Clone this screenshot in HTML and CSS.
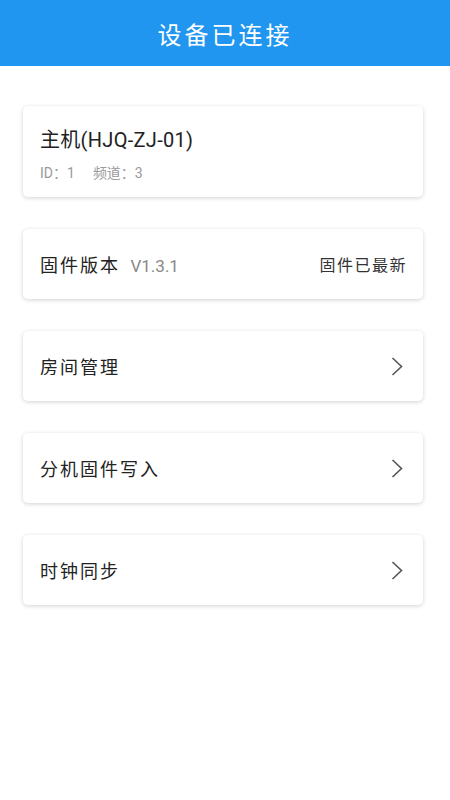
FILE: index.html
```html
<!DOCTYPE html>
<html>
<head>
    <title>设备已连接</title>
    <link rel="stylesheet" href="styles.css">
</head>
<body>
    <div class="header">设备已连接</div>
    <div class="list">
        <div class="card device">
            <div class="device-name">主机(HJQ-ZJ-01)</div>
            <div class="device-info"><span>ID：1</span><span>频道：3</span></div>
        </div>
        <div class="card row">
            <div class="label">固件版本 <span class="version">V1.3.1</span></div>
            <div class="state">固件已最新</div>
        </div>
        <div class="card row">
            <div class="label">房间管理</div>
            <svg class="arrow" viewBox="0 0 12 20" fill="none" stroke="currentColor" stroke-width="1.6">
                <polyline points="1.5 1.5 10.5 10 1.5 18.5" />
            </svg>
        </div>
        <div class="card row">
            <div class="label">分机固件写入</div>
            <svg class="arrow" viewBox="0 0 12 20" fill="none" stroke="currentColor" stroke-width="1.6">
                <polyline points="1.5 1.5 10.5 10 1.5 18.5" />
            </svg>
        </div>
        <div class="card row">
            <div class="label">时钟同步</div>
            <svg class="arrow" viewBox="0 0 12 20" fill="none" stroke="currentColor" stroke-width="1.6">
                <polyline points="1.5 1.5 10.5 10 1.5 18.5" />
            </svg>
        </div>
    </div>
</body>
</html>
```

FILE: styles.css
```css
body {
    margin: 0;
    min-height: 100vh;
    font-family: Roboto, "Noto Sans CJK SC", sans-serif;
    background: #ffffff;
    color: #222;
}

.header {
    height: 66px;
    background: #2196f0;
    color: #fff;
    font-size: 24px;
    letter-spacing: 3px;
    display: flex;
    align-items: center;
    justify-content: center;
}

.list {
    display: flex;
    flex-direction: column;
    gap: 32px;
    padding: 40px 0 40px 23px;
}

.card {
    width: 400px;
    box-sizing: border-box;
    background: #fff;
    border-radius: 5px;
    box-shadow: 0 1px 4px rgba(0,0,0,0.18);
    padding: 0 17px;
}

.device {
    height: 91px;
    display: flex;
    flex-direction: column;
    justify-content: center;
    gap: 9px;
    padding-top: 2px;
}

.device-name {
    font-size: 20px;
    letter-spacing: 0.3px;
    color: #222;
}

.device-info {
    font-size: 14px;
    color: #9a9a9a;
    display: flex;
    gap: 18px;
}

.row {
    height: 70px;
    display: flex;
    align-items: center;
    justify-content: space-between;
}

.label {
    font-size: 18px;
    letter-spacing: 2px;
    color: #222;
}

.version {
    font-size: 17px;
    letter-spacing: 0;
    color: #888;
    margin-left: 4px;
}

.state {
    font-size: 16px;
    letter-spacing: 1.5px;
    color: #333;
    margin-right: -1px;
}

.arrow {
    width: 12px;
    height: 21px;
    color: #555;
    margin-right: 3px;
}
```
